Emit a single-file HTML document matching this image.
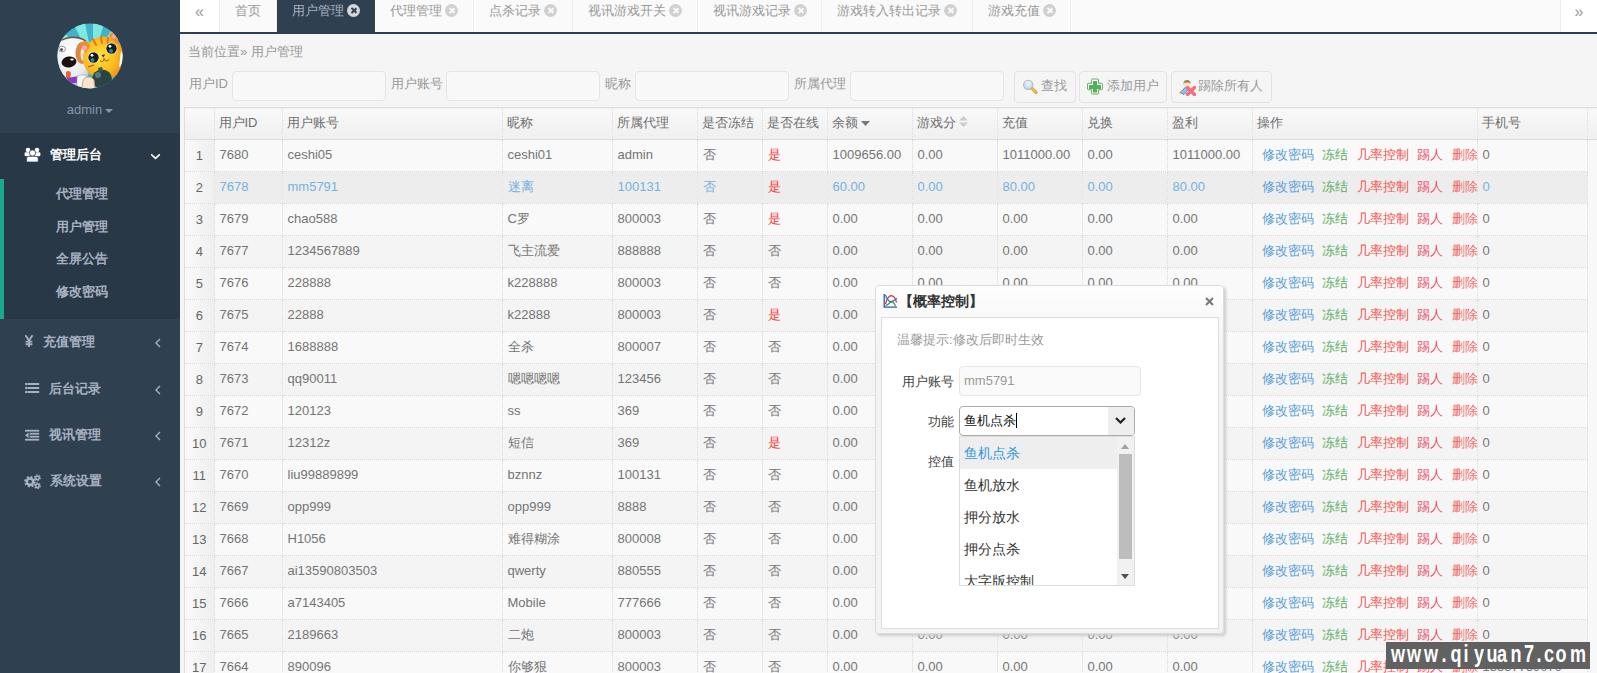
<!DOCTYPE html>
<html><head><meta charset="utf-8">
<style>
*{box-sizing:border-box}
html,body{margin:0;padding:0}
body{width:1597px;height:673px;overflow:hidden;position:relative;background:#f5f5f5;font-family:"Liberation Sans",sans-serif;font-size:13px;color:#666}
.abs{position:absolute}
#side{left:0;top:0;width:180px;height:673px;background:#2f4050}
#side .admin{left:0;width:180px;top:102px;text-align:center;color:#8796a8;font-size:13px;line-height:16px}
#side .caret{display:inline-block;width:0;height:0;border-left:4px solid transparent;border-right:4px solid transparent;border-top:4px solid #8796a8;vertical-align:middle;margin-left:3px}
#side .act{left:0;top:133px;width:180px;height:186px;background:#293846}
#side .bar{left:0;top:179px;width:4px;height:140px;background:#19aa8d}
.mi{position:absolute;left:0;width:180px;height:20px;line-height:20px;color:#a7b1c2;font-weight:bold;font-size:13px}
.mi span{position:absolute}
#tabs{left:180px;top:0;width:1417px;height:34px;background:#fafafa;border-bottom:2px solid #2f4050}
.tab{position:absolute;top:0;height:32px;line-height:22px;color:#999;border-right:1px solid #eee;padding-left:15px;white-space:nowrap}
.tab .x{display:inline-block;width:13px;height:13px;border-radius:50%;background:#d0d0d0;vertical-align:-2px;margin-left:3px;position:relative}
.tab .x:before,.tab .x:after{content:"";position:absolute;left:5.75px;top:3px;width:1.6px;height:7px;background:#fafafa;transform:rotate(45deg)}
.tab .x:after{transform:rotate(-45deg)}
.tab.active{background:#2f4050;color:#a7b1c2;border-right:none}
.tab.active .x{background:#d4d6d9}
.tab.active .x:before,.tab.active .x:after{background:#2f4050}
.roll{position:absolute;top:0;height:32px;background:#fff;color:#999;text-align:center;line-height:24px;font-size:16px}
.lbl{position:absolute;top:76px;line-height:16px;color:#999}
.inp{position:absolute;top:71px;height:30px;width:154px!important;border:1px solid #e5e5e5;border-radius:4px;background:#f8f8f8}
.btn{position:absolute;top:71px;height:32px;border:1px solid #e3e3e3;border-radius:4px;background:#f5f5f5;color:#999;line-height:29px;white-space:nowrap}
.btn svg{position:absolute}
.btn span{position:absolute;top:-1px;margin-left:-1px}
#grid{left:184px;top:107px;width:1420px;height:600px;overflow:hidden;border-left:1px solid #ddd;background:#f8f8f8}
table{border-collapse:collapse;table-layout:fixed;font-size:13px;width:1502px}
th{height:32px;font-weight:normal;text-align:left;padding:0 0 2px 4px;color:#6e6e6e;background:linear-gradient(#f9f9f9,#efefef);border-right:1px dotted #dadada;border-bottom:1px solid #ddd;border-top:1px solid #ddd;white-space:nowrap;overflow:hidden}
td{height:32px;padding:0 0 2px 5px;border-right:1px dotted #dadada;border-bottom:1px dotted #dadada;white-space:nowrap;overflow:hidden;background:#f9f9f9;color:#747474}
tr.alt td{background:#f4f4f4}
tr.sel td{background:#ededed;color:#74b2e0}
th.rn{padding:0}td.rn{text-align:center;padding:0;background:linear-gradient(to right,#f9f9f9,#efefef)!important;color:#666!important}
td.red,tr.sel td.red{color:#f03c3c}td.ex,tr.alt td.ex,tr.sel td.ex{background:transparent;border-bottom:none}
td.ops{padding-left:9px}td.ops span{margin-right:8.5px}
.b{color:#5a9de0}.g{color:#5cac5c}.r{color:#f5524c}.p{color:#f0506e}.p2{color:#f36a6a}
#combo{border-color:#aaa!important}
#modal{left:875px;top:285px;width:349px;height:349px;border:1px solid #ddd;border-radius:4px;background:linear-gradient(#fefefe,#f3f3f3 20%);box-shadow:2px 2px 3px #ccc}
#mbody{left:5px;top:31px;width:338px;height:312px;background:#fff;border:1px solid #ddd}
#wm{left:1386px;top:642px;width:204px;height:27px;background:#616161;color:#fff;font-family:"Liberation Sans",sans-serif;font-weight:bold;font-size:22px;line-height:27px}#wm b{position:absolute;top:-1.4px;width:20px;text-align:center;transform:scale(0.82,1.05)}
</style></head><body>
<div id="side" class="abs">
  <svg class="abs" style="left:57px;top:23px" width="66" height="66" viewBox="0 0 66 66">
    <defs><clipPath id="cc"><circle cx="33" cy="33" r="32.6"/></clipPath>
    <radialGradient id="catg" cx="0.4" cy="0.45" r="0.65"><stop offset="0" stop-color="#ffe03a"/><stop offset="0.55" stop-color="#fbbf22"/><stop offset="1" stop-color="#ee8a18"/></radialGradient>
    <radialGradient id="dogg" cx="0.45" cy="0.3" r="0.75"><stop offset="0" stop-color="#ffffff"/><stop offset="0.7" stop-color="#e6eaee"/><stop offset="1" stop-color="#aab4bc"/></radialGradient></defs>
    <g clip-path="url(#cc)">
      <rect width="66" height="66" fill="#40b2c9"/>
      <path d="M36 40 L0 2 L0 18Z M36 40 L16 0 L28 0Z M36 40 L36 0 L47 0Z M36 40 L58 0 L66 4 L66 12Z" fill="#80e8e0"/>
      <path d="M-2 22 C2 15 14 13 26 17 C33 24 33 42 31 54 C29 63 16 66 6 64 C-2 60 -4 40 -2 22Z" fill="url(#dogg)"/>
      <path d="M3 18 C12 13 22 13 29 18" stroke="#7a5030" stroke-width="1.4" fill="none"/>
      <ellipse cx="25" cy="30" rx="6.5" ry="11" fill="#d88a42"/>
      <ellipse cx="26.5" cy="31" rx="3" ry="7" fill="#f0e6dc"/>
      <ellipse cx="5" cy="26" rx="3.4" ry="2.8" fill="#fff" stroke="#a08a70" stroke-width="0.9"/>
      <circle cx="4.5" cy="26.5" r="1.5" fill="#556"/>
      <ellipse cx="12" cy="39" rx="7.5" ry="5.5" fill="#1a1010" transform="rotate(-8 12 39)"/>
      <ellipse cx="15" cy="36.5" rx="1.8" ry="1.1" fill="#fff"/>
      <path d="M9 49 C11 47 14 48 14 51 L13 55 L9 55Z" fill="#e8652a"/>
      <path d="M10 55 L22 53 L21 60 L11 60Z" fill="#8b34c8"/>
      <rect x="20" y="52" width="10" height="13" rx="3" fill="#f4f4f4" stroke="#9aa" stroke-width="0.6"/>
      <ellipse cx="47" cy="35" rx="21" ry="21.5" fill="url(#catg)"/>
      <path d="M23 22 C25 16 31 17 33 23 L29 30Z" fill="#f0902a"/>
      <circle cx="27.5" cy="25" r="2.6" fill="#f6a8b8"/>
      <path d="M52 13 C54 7 60 7 62 13 L60 21Z" fill="#f0902a"/>
      <circle cx="57" cy="13.5" r="2.2" fill="#f6a8b8"/>
      <path d="M36 16 L39 22 M44 14 L45 20 M51 15 L50.5 20" stroke="#e2781a" stroke-width="2" stroke-linecap="round"/>
      <circle cx="36.5" cy="34.5" r="5.8" fill="#fff"/>
      <circle cx="36.5" cy="34.5" r="5.2" fill="#141c1e"/>
      <circle cx="35.5" cy="37" r="2" fill="#2a8a88"/>
      <circle cx="35" cy="32.3" r="1.4" fill="#fff"/>
      <circle cx="54.5" cy="25.5" r="5.8" fill="#fff"/>
      <circle cx="54.5" cy="25.5" r="5.2" fill="#141c1e"/>
      <circle cx="54" cy="28" r="2" fill="#2a8a88"/>
      <circle cx="53" cy="23.3" r="1.4" fill="#fff"/>
      <path d="M44.5 32 L48 31.5 L46.5 34.5Z" fill="#3a2010"/>
      <path d="M43 37.5 C45 39.5 47 38.5 47 35.5 C48 38.5 50 38.5 52 36.5" stroke="#7a3a10" stroke-width="0.9" fill="none"/>
      <path d="M31 44 L37 42" stroke="#9a4a1a" stroke-width="1" fill="none"/>
      <path d="M64 28 C68 32 67 42 62 44Z" fill="#fff"/>
      <ellipse cx="45" cy="56" rx="10" ry="9.5" fill="#2a4444"/>
      <circle cx="41" cy="52" r="3" fill="#5a7a78"/>
      <path d="M41 45 L45 44 L46 48 L42 49Z" fill="#3a5a58"/>
      <path d="M26 57 C28 53 35 53 37 57 L38 66 L25 66Z" fill="#f6e4d0" stroke="#c89878" stroke-width="0.8"/>
    </g>
  </svg>
  <div class="abs admin">admin<span class="caret"></span></div>
  <div class="abs act"></div>
  <div class="abs bar"></div>
  <div class="mi" style="top:145px;color:#fff">
    <svg style="position:absolute;left:24px;top:2px" width="17" height="16" viewBox="0 0 17 16"><circle cx="4" cy="3" r="2.3" fill="#fff"/><circle cx="13" cy="3" r="2.3" fill="#fff"/><rect x="0.6" y="5.2" width="5.6" height="4" rx="1.2" fill="#fff"/><rect x="10.8" y="5.2" width="5.6" height="4" rx="1.2" fill="#fff"/><circle cx="8.5" cy="6" r="3.1" fill="#fff" stroke="#293846" stroke-width="0.7"/><path d="M2.6 15 V11.5 Q2.6 9.3 5 9.3 H12 Q14.2 9.3 14.2 11.5 V15Z" fill="#fff" stroke="#293846" stroke-width="0.7"/></svg>
    <span style="left:50px">管理后台</span>
    <svg style="position:absolute;left:150px;top:8px" width="11" height="7" viewBox="0 0 11 7"><path d="M1.2 1.4 L5.5 5.4 L9.8 1.4" stroke="#fff" stroke-width="1.5" fill="none"/></svg>
  </div>
  <div class="mi" style="top:184px"><span style="left:56px">代理管理</span></div>
  <div class="mi" style="top:217px"><span style="left:56px">用户管理</span></div>
  <div class="mi" style="top:249px"><span style="left:56px">全屏公告</span></div>
  <div class="mi" style="top:282px"><span style="left:56px">修改密码</span></div>
  <div class="mi" style="top:332px"><svg style="position:absolute;left:24px;top:2px" width="10" height="13" viewBox="0 0 10 13"><path d="M1.5 1.3 L5 6.5 L8.5 1.3 M5 6.5 V13 M1.6 7.6 H8.4 M1.6 10.2 H8.4" stroke="#a7b1c2" stroke-width="1.9" fill="none"/></svg><span style="left:43px">充值管理</span><svg style="position:absolute;left:155px;top:5.5px" width="6" height="10" viewBox="0 0 6 10"><path d="M5 1 L1 5 L5 9" stroke="#a7b1c2" stroke-width="1.4" fill="none"/></svg></div>
  <div class="mi" style="top:379px">
    <svg style="position:absolute;left:25px;top:4px" width="15" height="12" viewBox="0 0 15 12"><circle cx="1.3" cy="1" r="1.3" fill="#a7b1c2"/><circle cx="1.3" cy="5" r="1.3" fill="#a7b1c2"/><circle cx="1.3" cy="9" r="1.3" fill="#a7b1c2"/><rect x="2.6" y="0" width="11.6" height="2" fill="#a7b1c2"/><rect x="2.6" y="4" width="11.6" height="2" fill="#a7b1c2"/><rect x="2.6" y="8" width="11.6" height="2" fill="#a7b1c2"/></svg>
    <span style="left:49px">后台记录</span><svg style="position:absolute;left:155px;top:5.5px" width="6" height="10" viewBox="0 0 6 10"><path d="M5 1 L1 5 L5 9" stroke="#a7b1c2" stroke-width="1.4" fill="none"/></svg></div>
  <div class="mi" style="top:425px">
    <svg style="position:absolute;left:25px;top:4px" width="15" height="12" viewBox="0 0 15 12"><rect x="0" y="0.8" width="14.2" height="1.8" fill="#a7b1c2"/><rect x="4.6" y="3.8" width="9.6" height="1.8" fill="#a7b1c2"/><rect x="4.6" y="6.8" width="9.6" height="1.8" fill="#a7b1c2"/><rect x="0" y="9.8" width="14.2" height="1.8" fill="#a7b1c2"/><path d="M0 6.2 L3.6 3.4 V9Z" fill="#a7b1c2"/></svg>
    <span style="left:49px">视讯管理</span><svg style="position:absolute;left:155px;top:5.5px" width="6" height="10" viewBox="0 0 6 10"><path d="M5 1 L1 5 L5 9" stroke="#a7b1c2" stroke-width="1.4" fill="none"/></svg></div>
  <div class="mi" style="top:471px">
    <svg style="position:absolute;left:24px;top:3px" width="17" height="15" viewBox="0 0 17 15"><circle cx="6" cy="7.7" r="3.2" stroke="#a7b1c2" stroke-width="2.6" fill="none"/><circle cx="6" cy="7.7" r="4.9" stroke="#a7b1c2" stroke-width="1.8" fill="none" stroke-dasharray="1.9 1.95"/><circle cx="13.4" cy="3.7" r="1.8" stroke="#a7b1c2" stroke-width="1.5" fill="none"/><circle cx="13.4" cy="3.7" r="2.9" stroke="#a7b1c2" stroke-width="1.2" fill="none" stroke-dasharray="1.5 1.54"/><circle cx="13.4" cy="11.8" r="1.8" stroke="#a7b1c2" stroke-width="1.5" fill="none"/><circle cx="13.4" cy="11.8" r="2.9" stroke="#a7b1c2" stroke-width="1.2" fill="none" stroke-dasharray="1.5 1.54"/></svg>
    <span style="left:50px">系统设置</span><svg style="position:absolute;left:155px;top:5.5px" width="6" height="10" viewBox="0 0 6 10"><path d="M5 1 L1 5 L5 9" stroke="#a7b1c2" stroke-width="1.4" fill="none"/></svg></div>
</div>

<div id="tabs" class="abs">
  <div class="roll" style="left:0;width:40px;border-right:1px solid #eee">«</div>
  <div class="tab" style="left:40px;width:57px">首页</div>
  <div class="tab active" style="left:97px;width:98px">用户管理<i class="x"></i></div>
  <div class="tab" style="left:195px;width:99px">代理管理<i class="x"></i></div>
  <div class="tab" style="left:294px;width:99px">点杀记录<i class="x"></i></div>
  <div class="tab" style="left:393px;width:125px">视讯游戏开关<i class="x"></i></div>
  <div class="tab" style="left:518px;width:124px">视讯游戏记录<i class="x"></i></div>
  <div class="tab" style="left:642px;width:151px">游戏转入转出记录<i class="x"></i></div>
  <div class="tab" style="left:793px;width:98px">游戏充值<i class="x"></i></div>
  <div class="roll" style="left:1380px;width:37px;border-left:1px solid #eee">»</div>
</div>

<div class="abs" style="left:188px;top:44px;line-height:16px;color:#999">当前位置» 用户管理</div>
<div class="lbl" style="left:189px">用户ID</div>
<div class="inp" style="left:232px;width:153px"></div>
<div class="lbl" style="left:391px">用户账号</div>
<div class="inp" style="left:446px;width:153px"></div>
<div class="lbl" style="left:605px">昵称</div>
<div class="inp" style="left:635px;width:153px"></div>
<div class="lbl" style="left:794px">所属代理</div>
<div class="inp" style="left:850px;width:153px"></div>
<div class="btn" style="left:1014px;width:62px">
  <svg style="left:7px;top:6px" width="16" height="16" viewBox="0 0 16 16"><defs><radialGradient id="gl" cx="0.5" cy="0.35" r="0.6"><stop offset="0" stop-color="#eef6ff"/><stop offset="1" stop-color="#b9d8f5"/></radialGradient></defs><path d="M9.8 10.2 L14 14.4" stroke="#e0962a" stroke-width="3" stroke-linecap="round"/><path d="M10.2 10.6 L13.6 14" stroke="#f3d040" stroke-width="1.2" stroke-linecap="round"/><circle cx="6.2" cy="6.8" r="4.6" fill="url(#gl)" stroke="#b8b8b8" stroke-width="1.1"/></svg>
  <span style="left:27px">查找</span></div>
<div class="btn" style="left:1079px;width:88px">
  <svg style="left:7px;top:6px" width="16" height="17" viewBox="0 0 16 17"><path d="M5.2 1 Q4.6 1 4.6 1.6 V5.3 H1.2 Q0.6 5.3 0.6 5.9 V11.1 Q0.6 11.7 1.2 11.7 H4.6 V15.4 Q4.6 16 5.2 16 H10.8 Q11.4 16 11.4 15.4 V11.7 H14.8 Q15.4 11.7 15.4 11.1 V5.9 Q15.4 5.3 14.8 5.3 H11.4 V1.6 Q11.4 1 10.8 1Z" fill="#fff" stroke="#6aa46a" stroke-width="1"/><path d="M6 3 H10 V7.1 H14 V10.9 H10 V14.6 H6 V10.9 H2 V7.1 H6Z" fill="#4fb453"/></svg>
  <span style="left:28px">添加用户</span></div>
<div class="btn" style="left:1171px;width:101px">
  <svg style="left:7px;top:7px" width="17" height="17" viewBox="0 0 17 17"><path d="M1.5 13.5 L7 7.5 L10 10 L5 15.5Z" fill="#8cc4f0" stroke="#3f7fd0" stroke-width="0.9"/><circle cx="1.8" cy="13.8" r="1.3" fill="#e89a4a"/><circle cx="8" cy="5" r="3.6" fill="#f8e2c8"/><path d="M4.4 4.8 Q4.6 1 8 1 Q11.4 1 11.6 4.8 Q10 3.2 8 3.4 Q6 3.2 4.4 4.8Z" fill="#b07a48"/><path d="M8.5 8.5 L15.5 15.5 M15.5 8.5 L8.5 15.5" stroke="#f2707e" stroke-width="3.4" stroke-linecap="round"/></svg>
  <span style="left:27px">踢除所有人</span></div>

<div id="grid" class="abs">
<table>
<colgroup><col style="width:29px"><col style="width:68px"><col style="width:220px"><col style="width:110px"><col style="width:85px"><col style="width:65px"><col style="width:65px"><col style="width:85px"><col style="width:85px"><col style="width:85px"><col style="width:85px"><col style="width:85px"><col style="width:225px"><col style="width:110px"><col style="width:100px"></colgroup>
<thead><tr><th class="rn"></th><th>用户ID</th><th>用户账号</th><th>昵称</th><th>所属代理</th><th>是否冻结</th><th>是否在线</th><th>余额 <svg width="9" height="6" viewBox="0 0 9 6"><path d="M0 0 H9 L4.5 5Z" fill="#777"/></svg></th><th>游戏分 <svg width="9" height="11" viewBox="0 0 9 11"><path d="M0 4.5 H9 L4.5 0Z M0 6.5 H9 L4.5 11Z" fill="#ccc"/></svg></th><th>充值</th><th>兑换</th><th>盈利</th><th>操作</th><th>手机号</th><th></th></tr></thead>
<tbody>
<tr class=""><td class="rn">1</td><td>7680</td><td>ceshi05</td><td>ceshi01</td><td>admin</td><td>否</td><td class="red">是</td><td>1009656.00</td><td>0.00</td><td>1011000.00</td><td>0.00</td><td>1011000.00</td><td class="ops"><span class="b">修改密码</span><span class="g">冻结</span><span class="r">几率控制</span><span class="p">踢人</span><span class="p2">删除</span></td><td>0</td><td class="ex"></td></tr>
<tr class="sel"><td class="rn">2</td><td>7678</td><td>mm5791</td><td>迷离</td><td>100131</td><td>否</td><td class="red">是</td><td>60.00</td><td>0.00</td><td>80.00</td><td>0.00</td><td>80.00</td><td class="ops"><span class="b">修改密码</span><span class="g">冻结</span><span class="r">几率控制</span><span class="p">踢人</span><span class="p2">删除</span></td><td>0</td><td class="ex"></td></tr>
<tr class=""><td class="rn">3</td><td>7679</td><td>chao588</td><td>C罗</td><td>800003</td><td>否</td><td class="red">是</td><td>0.00</td><td>0.00</td><td>0.00</td><td>0.00</td><td>0.00</td><td class="ops"><span class="b">修改密码</span><span class="g">冻结</span><span class="r">几率控制</span><span class="p">踢人</span><span class="p2">删除</span></td><td>0</td><td class="ex"></td></tr>
<tr class="alt"><td class="rn">4</td><td>7677</td><td>1234567889</td><td>飞主流爱</td><td>888888</td><td>否</td><td>否</td><td>0.00</td><td>0.00</td><td>0.00</td><td>0.00</td><td>0.00</td><td class="ops"><span class="b">修改密码</span><span class="g">冻结</span><span class="r">几率控制</span><span class="p">踢人</span><span class="p2">删除</span></td><td>0</td><td class="ex"></td></tr>
<tr class=""><td class="rn">5</td><td>7676</td><td>228888</td><td>k228888</td><td>800003</td><td>否</td><td>否</td><td>0.00</td><td>0.00</td><td>0.00</td><td>0.00</td><td>0.00</td><td class="ops"><span class="b">修改密码</span><span class="g">冻结</span><span class="r">几率控制</span><span class="p">踢人</span><span class="p2">删除</span></td><td>0</td><td class="ex"></td></tr>
<tr class="alt"><td class="rn">6</td><td>7675</td><td>22888</td><td>k22888</td><td>800003</td><td>否</td><td class="red">是</td><td>0.00</td><td>0.00</td><td>0.00</td><td>0.00</td><td>0.00</td><td class="ops"><span class="b">修改密码</span><span class="g">冻结</span><span class="r">几率控制</span><span class="p">踢人</span><span class="p2">删除</span></td><td>0</td><td class="ex"></td></tr>
<tr class=""><td class="rn">7</td><td>7674</td><td>1688888</td><td>全杀</td><td>800007</td><td>否</td><td>否</td><td>0.00</td><td>0.00</td><td>0.00</td><td>0.00</td><td>0.00</td><td class="ops"><span class="b">修改密码</span><span class="g">冻结</span><span class="r">几率控制</span><span class="p">踢人</span><span class="p2">删除</span></td><td>0</td><td class="ex"></td></tr>
<tr class="alt"><td class="rn">8</td><td>7673</td><td>qq90011</td><td>嗯嗯嗯嗯</td><td>123456</td><td>否</td><td>否</td><td>0.00</td><td>0.00</td><td>0.00</td><td>0.00</td><td>0.00</td><td class="ops"><span class="b">修改密码</span><span class="g">冻结</span><span class="r">几率控制</span><span class="p">踢人</span><span class="p2">删除</span></td><td>0</td><td class="ex"></td></tr>
<tr class=""><td class="rn">9</td><td>7672</td><td>120123</td><td>ss</td><td>369</td><td>否</td><td>否</td><td>0.00</td><td>0.00</td><td>0.00</td><td>0.00</td><td>0.00</td><td class="ops"><span class="b">修改密码</span><span class="g">冻结</span><span class="r">几率控制</span><span class="p">踢人</span><span class="p2">删除</span></td><td>0</td><td class="ex"></td></tr>
<tr class="alt"><td class="rn">10</td><td>7671</td><td>12312z</td><td>短信</td><td>369</td><td>否</td><td class="red">是</td><td>0.00</td><td>0.00</td><td>0.00</td><td>0.00</td><td>0.00</td><td class="ops"><span class="b">修改密码</span><span class="g">冻结</span><span class="r">几率控制</span><span class="p">踢人</span><span class="p2">删除</span></td><td>0</td><td class="ex"></td></tr>
<tr class=""><td class="rn">11</td><td>7670</td><td>liu99889899</td><td>bznnz</td><td>100131</td><td>否</td><td>否</td><td>0.00</td><td>0.00</td><td>0.00</td><td>0.00</td><td>0.00</td><td class="ops"><span class="b">修改密码</span><span class="g">冻结</span><span class="r">几率控制</span><span class="p">踢人</span><span class="p2">删除</span></td><td>0</td><td class="ex"></td></tr>
<tr class="alt"><td class="rn">12</td><td>7669</td><td>opp999</td><td>opp999</td><td>8888</td><td>否</td><td>否</td><td>0.00</td><td>0.00</td><td>0.00</td><td>0.00</td><td>0.00</td><td class="ops"><span class="b">修改密码</span><span class="g">冻结</span><span class="r">几率控制</span><span class="p">踢人</span><span class="p2">删除</span></td><td>0</td><td class="ex"></td></tr>
<tr class=""><td class="rn">13</td><td>7668</td><td>H1056</td><td>难得糊涂</td><td>800008</td><td>否</td><td>否</td><td>0.00</td><td>0.00</td><td>0.00</td><td>0.00</td><td>0.00</td><td class="ops"><span class="b">修改密码</span><span class="g">冻结</span><span class="r">几率控制</span><span class="p">踢人</span><span class="p2">删除</span></td><td>0</td><td class="ex"></td></tr>
<tr class="alt"><td class="rn">14</td><td>7667</td><td>ai13590803503</td><td>qwerty</td><td>880555</td><td>否</td><td>否</td><td>0.00</td><td>0.00</td><td>0.00</td><td>0.00</td><td>0.00</td><td class="ops"><span class="b">修改密码</span><span class="g">冻结</span><span class="r">几率控制</span><span class="p">踢人</span><span class="p2">删除</span></td><td>0</td><td class="ex"></td></tr>
<tr class=""><td class="rn">15</td><td>7666</td><td>a7143405</td><td>Mobile</td><td>777666</td><td>否</td><td>否</td><td>0.00</td><td>0.00</td><td>0.00</td><td>0.00</td><td>0.00</td><td class="ops"><span class="b">修改密码</span><span class="g">冻结</span><span class="r">几率控制</span><span class="p">踢人</span><span class="p2">删除</span></td><td>0</td><td class="ex"></td></tr>
<tr class="alt"><td class="rn">16</td><td>7665</td><td>2189663</td><td>二炮</td><td>800003</td><td>否</td><td>否</td><td>0.00</td><td>0.00</td><td>0.00</td><td>0.00</td><td>0.00</td><td class="ops"><span class="b">修改密码</span><span class="g">冻结</span><span class="r">几率控制</span><span class="p">踢人</span><span class="p2">删除</span></td><td>0</td><td class="ex"></td></tr>
<tr class=""><td class="rn">17</td><td>7664</td><td>890096</td><td>你够狠</td><td>800003</td><td>否</td><td>否</td><td>0.00</td><td>0.00</td><td>0.00</td><td>0.00</td><td>0.00</td><td class="ops"><span class="b">修改密码</span><span class="g">冻结</span><span class="r">几率控制</span><span class="p">踢人</span><span class="p2">删除</span></td><td>13537759079</td><td class="ex"></td></tr></tbody></table>
</div>

<div id="modal" class="abs">
  <svg class="abs" style="left:7px;top:8px" width="14" height="14" viewBox="0 0 14 14"><path d="M1.2 0 V13.2 H14" stroke="#1f5fbf" stroke-width="1.3" fill="none"/><path d="M2.5 10 Q4.5 2 8 1.6 Q12 1.6 13.5 8.5" stroke="#ee2a2a" stroke-width="1.2" fill="none"/><path d="M2.3 1 Q4 5.5 6.5 7.5 Q9 8.5 13.8 4.3" stroke="#2a6ee8" stroke-width="1.2" fill="none"/><path d="M2.5 11.8 Q6 10 7.5 8.2 Q10 6.5 12.5 12" stroke="#3a8f2a" stroke-width="1.2" fill="none"/></svg>
  <div class="abs" style="left:23px;top:6px;line-height:18px;font-weight:bold;color:#333;font-size:14px">【概率控制】</div>
  <svg class="abs" style="left:329px;top:11px" width="9" height="9" viewBox="0 0 9 9"><path d="M1 1 L8 8 M8 1 L1 8" stroke="#777" stroke-width="2"/></svg>
  <div id="mbody" class="abs">
    <div class="abs" style="left:15px;top:14px;line-height:16px;color:#999">温馨提示:修改后即时生效</div>
    <div class="abs" style="left:20px;top:56px;line-height:16px;color:#444">用户账号</div>
    <div class="abs" style="left:77px;top:48px;width:182px;height:30px;border:1px solid #e6e6e6;border-radius:4px;background:#fafafa;color:#999;line-height:28px;padding-left:4px">mm5791</div>
    <div class="abs" style="left:46px;top:96px;line-height:16px;color:#444">功能</div>
    <div id="combo" class="abs" style="left:77px;top:88px;width:176px;height:30px;border:1px solid #999;border-radius:4px;background:#fff;color:#111;line-height:28px;padding-left:4px;overflow:hidden">鱼机点杀<span style="display:inline-block;width:1px;height:15px;background:#000;vertical-align:-3px"></span>
      <div class="abs" style="right:0;top:0;width:26px;height:28px;background:#eee"><svg class="abs" style="left:7px;top:10px" width="11" height="7" viewBox="0 0 11 7"><path d="M1 1 L5.5 5.5 L10 1" stroke="#222" stroke-width="2.2" fill="none"/></svg></div>
    </div>
    <div class="abs" style="left:46px;top:136px;line-height:16px;color:#444">控值</div>
    <div class="abs" style="left:77px;top:118px;width:176px;height:150px;border:1px solid #ddd;background:#fff;overflow:hidden;font-size:14px">
      <div class="abs" style="left:0;top:0;width:157px;height:32px;background:#eee;color:#3399dd;line-height:32px;padding-left:4px">鱼机点杀</div>
      <div class="abs" style="left:0;top:32px;width:157px;height:32px;color:#333;line-height:32px;padding-left:4px">鱼机放水</div>
      <div class="abs" style="left:0;top:64px;width:157px;height:32px;color:#333;line-height:32px;padding-left:4px">押分放水</div>
      <div class="abs" style="left:0;top:96px;width:157px;height:32px;color:#333;line-height:32px;padding-left:4px">押分点杀</div>
      <div class="abs" style="left:0;top:128px;width:157px;height:32px;color:#333;line-height:32px;padding-left:4px">大字版控制</div>
      <div class="abs" style="left:157px;top:0;width:17px;height:148px;background:#f1f1f1">
        <svg class="abs" style="left:4px;top:7px" width="8" height="5" viewBox="0 0 8 5"><path d="M0 5 H8 L4 0Z" fill="#a3a3a3"/></svg>
        <div class="abs" style="left:2px;top:17px;width:13px;height:105px;background:#bdbdbd"></div>
        <svg class="abs" style="left:4px;top:137px" width="8" height="5" viewBox="0 0 8 5"><path d="M0 0 H8 L4 5Z" fill="#505050"/></svg>
      </div>
    </div>
  </div>
</div>

<div id="wm" class="abs"><b style="left:2.0px">w</b><b style="left:18.0px">w</b><b style="left:35.0px">w</b><b style="left:48.0px">.</b><b style="left:60.0px">q</b><b style="left:69.6px">i</b><b style="left:82.6px">y</b><b style="left:95.5px">u</b><b style="left:106.0px">a</b><b style="left:119.5px">n</b><b style="left:132.9px">7</b><b style="left:143.3px">.</b><b style="left:152.7px">c</b><b style="left:164.7px">o</b><b style="left:181.9px">m</b></div>
</body></html>
